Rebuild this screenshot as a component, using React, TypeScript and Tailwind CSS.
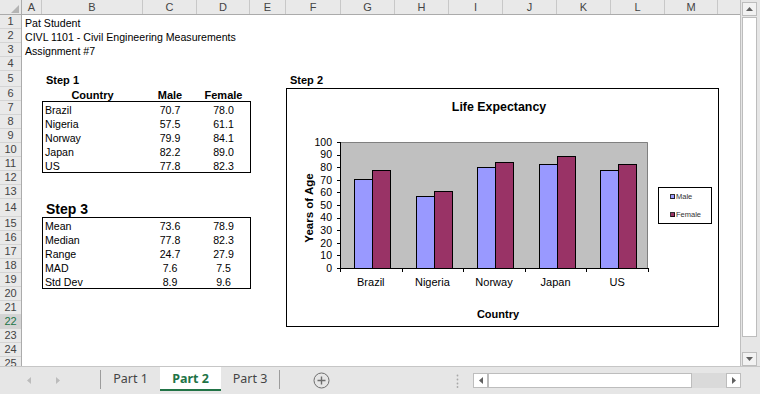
import React from 'react';

type Col = { label: string; w: string };

const columns: Col[] = [
  { label: 'A', w: 'w-[20px]' },
  { label: 'B', w: 'w-[101px]' },
  { label: 'C', w: 'w-[54px]' },
  { label: 'D', w: 'w-[53px]' },
  { label: 'E', w: 'w-[36px]' },
  { label: 'F', w: 'w-[55px]' },
  { label: 'G', w: 'w-[54px]' },
  { label: 'H', w: 'w-[54px]' },
  { label: 'I', w: 'w-[54px]' },
  { label: 'J', w: 'w-[54px]' },
  { label: 'K', w: 'w-[54px]' },
  { label: 'L', w: 'w-[54px]' },
  { label: 'M', w: 'w-[53px]' },
];

const rowHeights: Record<number, string> = { 5: 'h-[16px]', 14: 'h-[18px]' };
const rowNumbers = Array.from({ length: 25 }, (_, i) => i + 1);
const selectedRow = 22;

const countries = [
  { name: 'Brazil', male: 70.7, female: 78.0 },
  { name: 'Nigeria', male: 57.5, female: 61.1 },
  { name: 'Norway', male: 79.9, female: 84.1 },
  { name: 'Japan', male: 82.2, female: 89.0 },
  { name: 'US', male: 77.8, female: 82.3 },
];

const stats = [
  { name: 'Mean', male: 73.6, female: 78.9 },
  { name: 'Median', male: 77.8, female: 82.3 },
  { name: 'Range', male: 24.7, female: 27.9 },
  { name: 'MAD', male: 7.6, female: 7.5 },
  { name: 'Std Dev', male: 8.9, female: 9.6 },
];

type Row = { name: string; male: number; female: number };

const DataTable: React.FC<{ rows: Row[] }> = ({ rows }) => (
  <div className="w-[209px] border border-black text-[10.6px]">
    {rows.map((r) => (
      <div key={r.name} className="flex h-[14px] leading-[16px]">
        <div className="w-[100px] pl-[2px]">{r.name}</div>
        <div className="w-[54px] text-center">{r.male.toFixed(1)}</div>
        <div className="w-[53px] text-center">{r.female.toFixed(1)}</div>
      </div>
    ))}
  </div>
);

const Chart: React.FC = () => {
  const px = 53;
  const py = 53;
  const pw = 308;
  const ph = 126;
  const band = pw / 5;
  const k = ph / 100;
  const base = py + ph;
  const ticks = [0, 10, 20, 30, 40, 50, 60, 70, 80, 90, 100];

  return (
    <svg width="431" height="237" viewBox="0 0 431 237" fontFamily="'Liberation Sans', Arial, sans-serif">
      <text x="212" y="22" textAnchor="middle" fontSize="12.4" fontWeight="bold">
        Life Expectancy
      </text>

      {/* plot area */}
      <rect x={px} y={py} width={pw} height={ph} fill="#c0c0c0" />
      <path d={`M${px} ${py + 0.5}H${px + pw - 0.5}V${base}`} stroke="#808080" fill="none" />

      {countries.map((c, i) => {
        const x = Math.round(px + i * band + 14);
        const hm = Math.round(c.male * k);
        const hf = Math.round(c.female * k);
        return (
          <g key={c.name} shapeRendering="crispEdges">
            <rect x={x + 0.5} y={base - hm + 0.5} width={18} height={hm} fill="#9999ff" stroke="#000" />
            <rect x={x + 18.5} y={base - hf + 0.5} width={18} height={hf} fill="#993366" stroke="#000" />
          </g>
        );
      })}

      {/* axes */}
      <g stroke="#000" shapeRendering="crispEdges">
        <line x1={px + 0.5} y1={py} x2={px + 0.5} y2={base + 1} />
        <line x1={px} y1={base + 0.5} x2={px + pw} y2={base + 0.5} />
        {ticks.map((t) => (
          <line key={t} x1={px - 3} y1={Math.round(base - t * k) + 0.5} x2={px} y2={Math.round(base - t * k) + 0.5} />
        ))}
        {[0, 1, 2, 3, 4, 5].map((i) => (
          <line key={i} x1={Math.round(px + i * band) + 0.5} y1={base} x2={Math.round(px + i * band) + 0.5} y2={base + 4} />
        ))}
      </g>

      {ticks.map((t) => (
        <text key={t} x="45" y={base - t * k} dy="0.36em" textAnchor="end" fontSize="10.5">
          {t}
        </text>
      ))}

      {countries.map((c, i) => (
        <text key={c.name} x={px + (i + 0.5) * band} y="197" textAnchor="middle" fontSize="11">
          {c.name}
        </text>
      ))}

      <text x="22" y="119" transform="rotate(-90 22 119)" textAnchor="middle" dy="0.36em" fontSize="11.5" fontWeight="bold">
        Years of Age
      </text>
      <text x="211" y="229" textAnchor="middle" fontSize="11" fontWeight="bold">
        Country
      </text>

      {/* legend */}
      <g shapeRendering="crispEdges">
        <rect x="371.5" y="98.5" width="53" height="36" fill="#fff" stroke="#000" />
        <rect x="383.5" y="105.5" width="4" height="4" fill="#9999ff" stroke="#000" strokeWidth="0.8" />
        <rect x="383.5" y="123.5" width="4" height="4" fill="#993366" stroke="#000" strokeWidth="0.8" />
      </g>
      <text x="389" y="107.5" dy="0.36em" fontSize="7.5" fill="#333">
        Male
      </text>
      <text x="389" y="125.5" dy="0.36em" fontSize="7.5" fill="#333">
        Female
      </text>
    </svg>
  );
};

const Arrow: React.FC<{ dir: 'up' | 'down' | 'left' | 'right'; color?: string }> = ({ dir, color = '#606060' }) => {
  const pts = {
    up: '0,4 7,4 3.5,0',
    down: '0,0 7,0 3.5,4',
    left: '4,0 4,7 0,3.5',
    right: '0,0 0,7 4,3.5',
  }[dir];
  const vertical = dir === 'up' || dir === 'down';
  return (
    <svg width={vertical ? 7 : 4} height={vertical ? 4 : 7}>
      <polygon points={pts} fill={color} />
    </svg>
  );
};

const App: React.FC = () => {
  return (
    <div className="w-[760px] h-[394px] overflow-hidden bg-white flex flex-col font-['Liberation_Sans',Arial,sans-serif] text-black">
      <div className="flex h-[366px]">
        {/* sheet */}
        <div className="w-[740px] flex flex-col">
          {/* column headers */}
          <div className="flex h-[15px] bg-[#e9e9e9] border-b border-[#ababab] text-[11px] text-[#444]">
            <div className="w-[22px] h-full border-r border-[#ababab] flex items-end justify-end pr-[2px] pb-[1px]">
              <svg width="8" height="8">
                <polygon points="8,0 8,8 0,8" fill="#b4b4b4" />
              </svg>
            </div>
            {columns.map((c) => (
              <div key={c.label} className={`${c.w} h-full border-r border-[#c8c8c8] flex items-center justify-center`}>
                {c.label}
              </div>
            ))}
            <div className="flex-1" />
          </div>

          {/* body */}
          <div className="flex flex-1 overflow-hidden">
            <div className="w-[22px] shrink-0 bg-[#e9e9e9] border-r border-[#ababab] text-[11px] text-[#444]">
              {rowNumbers.map((n) => (
                <div
                  key={n}
                  className={`${rowHeights[n] ?? 'h-[14px]'} border-b border-[#d4d4d4] flex items-center justify-center ${
                    n === selectedRow ? 'bg-[#d3d3d3] text-[#217346]' : ''
                  }`}
                >
                  {n}
                </div>
              ))}
            </div>

            <div className="flex-1 text-[10.6px]">
              <div className="h-[14px] leading-[16px] pl-[3px]">Pat Student</div>
              <div className="h-[14px] leading-[16px] pl-[3px] whitespace-nowrap">CIVL 1101 - Civil Engineering Measurements</div>
              <div className="h-[14px] leading-[16px] pl-[3px]">Assignment #7</div>
              <div className="h-[14px]" />

              <div className="flex">
                <div className="ml-[20px] w-[209px]">
                  <div className="h-[16px] leading-[18px] pl-[4px] text-[11px] font-bold">Step 1</div>
                  <div className="flex h-[14px] leading-[16px] text-[11px] font-bold">
                    <div className="w-[101px] text-center">Country</div>
                    <div className="w-[54px] text-center">Male</div>
                    <div className="w-[53px] text-center">Female</div>
                  </div>
                  <DataTable rows={countries} />
                  <div className="mt-[26px] h-[18px] leading-[21px] pl-[4px] text-[14px] font-bold">Step 3</div>
                  <DataTable rows={stats} />
                </div>

                <div className="ml-[35px]">
                  <div className="h-[17px] leading-[18px] pl-[4px] text-[11px] font-bold">Step 2</div>
                  <div className="w-[433px] h-[239px] border border-black bg-white">
                    <Chart />
                  </div>
                </div>
              </div>
            </div>
          </div>
        </div>

        {/* vertical scrollbar */}
        <div className="w-[20px] flex flex-col bg-[#e6e6e6] border-l border-[#bfbfbf] pl-[1px] pt-[2px]">
          <div className="w-[15px] h-[14px] border border-[#bdbdbd] bg-[#f2f2f2] flex items-center justify-center">
            <Arrow dir="up" />
          </div>
          <div className="mt-[1px] w-[15px] h-[320px] bg-white border border-[#bdbdbd]" />
          <div className="flex-1" />
          <div className="w-[15px] h-[14px] border border-[#bdbdbd] bg-[#f2f2f2] flex items-center justify-center">
            <Arrow dir="down" />
          </div>
        </div>
      </div>

      {/* sheet tabs */}
      <div className="h-[28px] bg-[#e6e6e6] border-t border-[#c6c6c6] flex items-start font-['Noto_Sans',sans-serif] text-[12.5px]">
        <div className="w-[100px] h-[26px] flex items-center">
          <div className="ml-[27px] flex">
            <Arrow dir="left" color="#bcbcbc" />
          </div>
          <div className="ml-[25px] flex">
            <Arrow dir="right" color="#bcbcbc" />
          </div>
        </div>
        <div className="w-px h-[19px] mt-[3px] bg-[#9c9c9c]" />
        <div className="w-[59px] h-[24px] pt-[2px] border-b-2 border-transparent flex items-center justify-center text-[#444]">
          Part 1
        </div>
        <div className="w-[61px] h-[24px] pt-[2px] bg-white border-b-2 border-[#217346] flex items-center justify-center font-bold text-[#217346]">
          Part 2
        </div>
        <div className="w-[58px] h-[24px] pt-[2px] border-b-2 border-transparent flex items-center justify-center text-[#444]">
          Part 3
        </div>
        <div className="w-px h-[19px] mt-[3px] bg-[#9c9c9c]" />
        <div className="w-[82px] h-[26px] flex items-center justify-center">
          <svg width="17" height="17" viewBox="0 0 17 17">
            <circle cx="8.5" cy="8.5" r="7.5" fill="none" stroke="#6e6e6e" />
            <path d="M8.5 4.5v8M4.5 8.5h8" stroke="#6e6e6e" strokeWidth="1.4" />
          </svg>
        </div>
        <div className="ml-[94px] mt-[7px] flex">
          <svg width="3" height="14">
            <circle cx="1.5" cy="1.5" r="0.9" fill="#a8a8a8" />
            <circle cx="1.5" cy="5.5" r="0.9" fill="#a8a8a8" />
            <circle cx="1.5" cy="9.5" r="0.9" fill="#a8a8a8" />
            <circle cx="1.5" cy="13" r="0.9" fill="#a8a8a8" />
          </svg>
        </div>
        <div className="ml-[14px] mt-[6px] flex h-[15px]">
          <div className="w-[15px] h-[15px] bg-white border border-[#bdbdbd] flex items-center justify-center">
            <Arrow dir="left" />
          </div>
          <div className="w-[238px] h-[15px] bg-[#dadada]">
            <div className="w-[204px] h-full bg-white border border-[#bdbdbd]" />
          </div>
          <div className="w-[15px] h-[15px] bg-white border border-[#bdbdbd] flex items-center justify-center">
            <Arrow dir="right" />
          </div>
        </div>
      </div>
    </div>
  );
};

export default App;
